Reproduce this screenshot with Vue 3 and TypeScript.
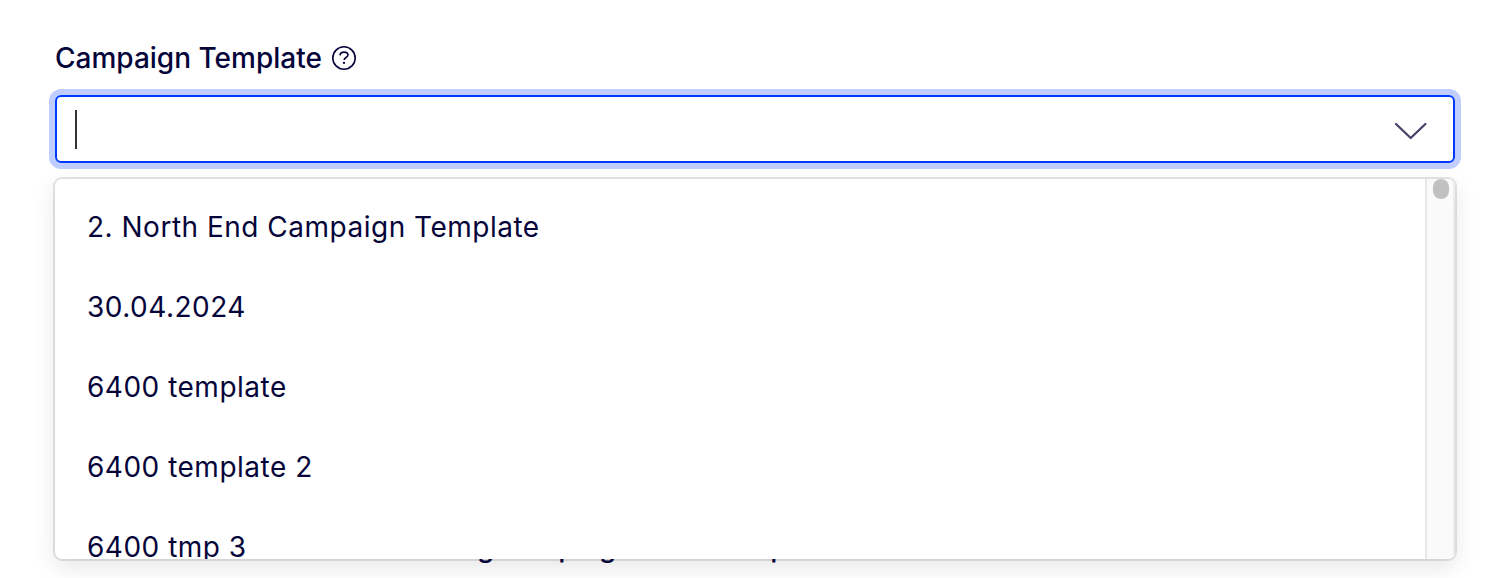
<script setup lang="ts">
const options: string[] = [
  '2. North End Campaign Template',
  '30.04.2024',
  '6400 template',
  '6400 template 2',
  '6400 tmp 3',
]
</script>

<template>
  <main class="page">
    <div class="field">
      <label class="label" for="campaign-template">
        <span class="label-text">Campaign Template</span>
        <svg class="help" width="26" height="26" viewBox="0 0 26 26" fill="none">
          <circle cx="13" cy="13" r="11.2" stroke="currentColor" stroke-width="1.6" />
          <path d="M9 10.4C9.1 8.3 10.7 7.1 13 7.1C15.4 7.1 17 8.3 17 10.1C17 12.5 13.1 12.4 13.1 14.9" stroke="currentColor" stroke-width="1.6" />
          <circle cx="13" cy="17.9" r="1.15" fill="currentColor" />
        </svg>
      </label>
      <div id="campaign-template" class="control" role="combobox" aria-expanded="true">
        <span class="caret"></span>
        <svg class="chevron" width="34" height="20" viewBox="0 0 34 20" fill="none">
          <path d="M2 3L16.7 17L31.4 3" stroke="#464369" stroke-width="2.3" stroke-linecap="round" stroke-linejoin="round" />
        </svg>
      </div>
    </div>

    <div class="menu">
      <ul class="list">
        <li v-for="option in options" :key="option" class="option">{{ option }}</li>
      </ul>
      <div class="track"><div class="thumb"></div></div>
    </div>

    <div class="beneath" aria-hidden="true">
      <span class="w1">g</span>
      <span class="w2">paig</span>
      <span class="w3">p</span>
    </div>
  </main>
</template>

<style>
body {
  margin: 0;
  overflow: hidden;
  background: #fff;
}
</style>

<style scoped>
.page {
  position: relative;
  box-sizing: border-box;
  width: 1510px;
  height: 578px;
  padding: 38px 55px 0;
  overflow: hidden;
  background: #fff;
  color: #05053a;
  font-family: Inter, 'Liberation Sans', sans-serif;
  font-size: 28px;
}
.label {
  display: flex;
  align-items: center;
  gap: 9px;
  height: 40px;
  margin-bottom: 17px;
}
.label-text {
  font-weight: 500;
}
.control {
  display: flex;
  align-items: center;
  justify-content: space-between;
  box-sizing: border-box;
  height: 68px;
  padding: 0 25px 0 18px;
  border: 2px solid #0038ff;
  border-radius: 6px;
  box-shadow: 0 0 0 6px #bfcdff;
}
.caret {
  width: 2px;
  height: 39px;
  background: #333;
}
.chevron {
  margin-top: 4px;
}
.menu {
  display: flex;
  height: 380px;
  margin-top: 16px;
  overflow: hidden;
  border-radius: 7px;
  background: #fff;
  box-shadow: 0 0 0 2px rgba(0, 0, 0, 0.1), 0 8px 24px rgba(0, 0, 0, 0.1);
}
.list {
  flex: 1;
  margin: 0;
  padding: 8px 0 0;
  list-style: none;
}
.option {
  height: 80px;
  padding-left: 32px;
  line-height: 80px;
  letter-spacing: 0.5px;
}
.track {
  box-sizing: border-box;
  width: 30px;
  padding-left: 6px;
  border-left: 2px solid #e8e8e8;
  border-right: 2px solid #ededed;
  background: #fafafa;
}
.thumb {
  width: 16px;
  height: 20px;
  border-radius: 8px;
  background: #c1c1c1;
}
.beneath {
  position: absolute;
  left: 477px;
  top: 559px;
  display: flex;
  height: 4px;
  overflow: hidden;
  font-weight: 500;
  line-height: 34px;
}
.beneath span {
  margin-top: -29px;
}
.w2 {
  margin-left: 64px;
}
.w3 {
  margin-left: 154px;
}
</style>
